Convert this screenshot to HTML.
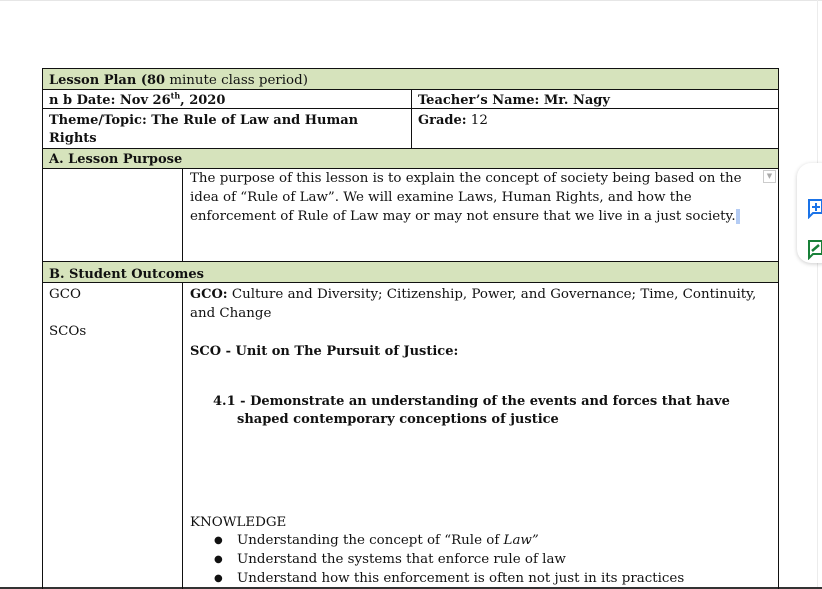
<!DOCTYPE html>
<html><head><style>
body{margin:0;width:822px;height:589px;background:#fff;position:relative;overflow:hidden;font-family:"DejaVu Serif",serif;font-size:13.4px;color:#111}
.a{position:absolute;white-space:nowrap;line-height:19px;top:0}
.b,b{font-weight:bold;font-size:13px}
.g{position:absolute;background:#d6e3bc}
.h{position:absolute;height:1px;background:#111}
.v{position:absolute;width:1px;background:#111}
.d{font-size:10px}
</style></head><body>
<div style="position:absolute;left:0;top:0;width:822px;height:1px;background:#e6e6e6"></div>
<div style="position:absolute;left:817px;top:0;width:1px;height:589px;background:#ececec"></div>
<div class="g" style="left:42px;top:69px;width:736px;height:20px"></div>
<div class="g" style="left:42px;top:149px;width:736px;height:19px"></div>
<div class="g" style="left:42px;top:262px;width:736px;height:20px"></div>
<div class="h" style="left:42px;top:68px;width:737px"></div>
<div class="h" style="left:42px;top:89px;width:737px"></div>
<div class="h" style="left:42px;top:108px;width:737px"></div>
<div class="h" style="left:42px;top:148px;width:737px"></div>
<div class="h" style="left:42px;top:168px;width:737px"></div>
<div class="h" style="left:42px;top:261px;width:737px"></div>
<div class="h" style="left:42px;top:282px;width:737px"></div>
<div class="h" style="left:0;top:587px;width:822px;height:2px;background:#333"></div>
<div class="v" style="left:42px;top:68px;height:521px"></div>
<div class="v" style="left:778px;top:68px;height:521px"></div>
<div class="v" style="left:411px;top:89px;height:60px"></div>
<div class="v" style="left:182px;top:168px;height:94px"></div>
<div class="v" style="left:182px;top:282px;height:307px"></div>
<div class="a" style="left:49px;top:71px"><b>Lesson Plan (80</b> minute class period)</div>
<div class="a b" style="left:49px;top:91px">n b Date: Nov 26<sup style="font-size:8px;line-height:0">th</sup>, 2020</div>
<div class="a b" style="left:418px;top:91px">Teacher’s Name: Mr. Nagy</div>
<div class="a b" style="left:49px;top:111px">Theme/Topic: The Rule of Law and Human</div>
<div class="a b" style="left:49px;top:129px">Rights</div>
<div class="a" style="left:418px;top:111px"><b>Grade:</b> 12</div>
<div class="a b" style="left:49px;top:150px">A. Lesson Purpose</div>
<div class="a" style="left:190px;top:169px">The purpose of this lesson is to explain the concept of society being based on the</div>
<div class="a" style="left:190px;top:188px">idea of “Rule of Law”. We will examine Laws, Human Rights, and how the</div>
<div class="a" style="left:190px;top:207px">enforcement of Rule of Law may or may not ensure that we live in a just society.<span style="background:#b4ccf4">&nbsp;</span></div>
<div style="position:absolute;left:763px;top:170px;width:11px;height:11px;border:1px solid #ccc;font-size:7px;color:#aaa;text-align:center;line-height:11px">▼</div>
<div class="a b" style="left:49px;top:265px">B. Student Outcomes</div>
<div class="a" style="left:49px;top:285px">GCO</div>
<div class="a" style="left:49px;top:322px">SCOs</div>
<div class="a" style="left:190px;top:285px"><b>GCO:</b> Culture and Diversity; Citizenship, Power, and Governance; Time, Continuity,</div>
<div class="a" style="left:190px;top:304px">and Change</div>
<div class="a b" style="left:190px;top:342px">SCO - Unit on The Pursuit of Justice:</div>
<div class="a b" style="left:213px;top:392px">4.1 - Demonstrate an understanding of the events and forces that have</div>
<div class="a b" style="left:237px;top:410px">shaped contemporary conceptions of justice</div>
<div class="a" style="left:190px;top:513px">KNOWLEDGE</div>
<div class="a d" style="left:214px;top:531px">●</div><div class="a" style="left:237px;top:531px">Understanding the concept of “Rule of <i>Law”</i></div>
<div class="a d" style="left:214px;top:550px">●</div><div class="a" style="left:237px;top:550px">Understand the systems that enforce rule of law</div>
<div class="a d" style="left:214px;top:569px">●</div><div class="a" style="left:237px;top:569px">Understand how this enforcement is often not just in its practices</div>
<div style="position:absolute;left:797px;top:163px;width:40px;height:100px;border-radius:14px;background:#fff;box-shadow:0 1px 4px rgba(0,0,0,.2)"></div>
<svg style="position:absolute;left:808px;top:199px" width="14" height="20" viewBox="0 0 14 20"><path d="M1 1h13v13H5l-4 4z" fill="none" stroke="#1a73e8" stroke-width="2"/><path d="M8 4v8M4 8h8" stroke="#1a73e8" stroke-width="2"/></svg>
<svg style="position:absolute;left:808px;top:240px" width="14" height="20" viewBox="0 0 14 20"><path d="M1 1h13v13H5l-4 4z" fill="none" stroke="#188038" stroke-width="2"/><path d="M4 11l7-6" stroke="#188038" stroke-width="2.5"/></svg>
</body></html>
